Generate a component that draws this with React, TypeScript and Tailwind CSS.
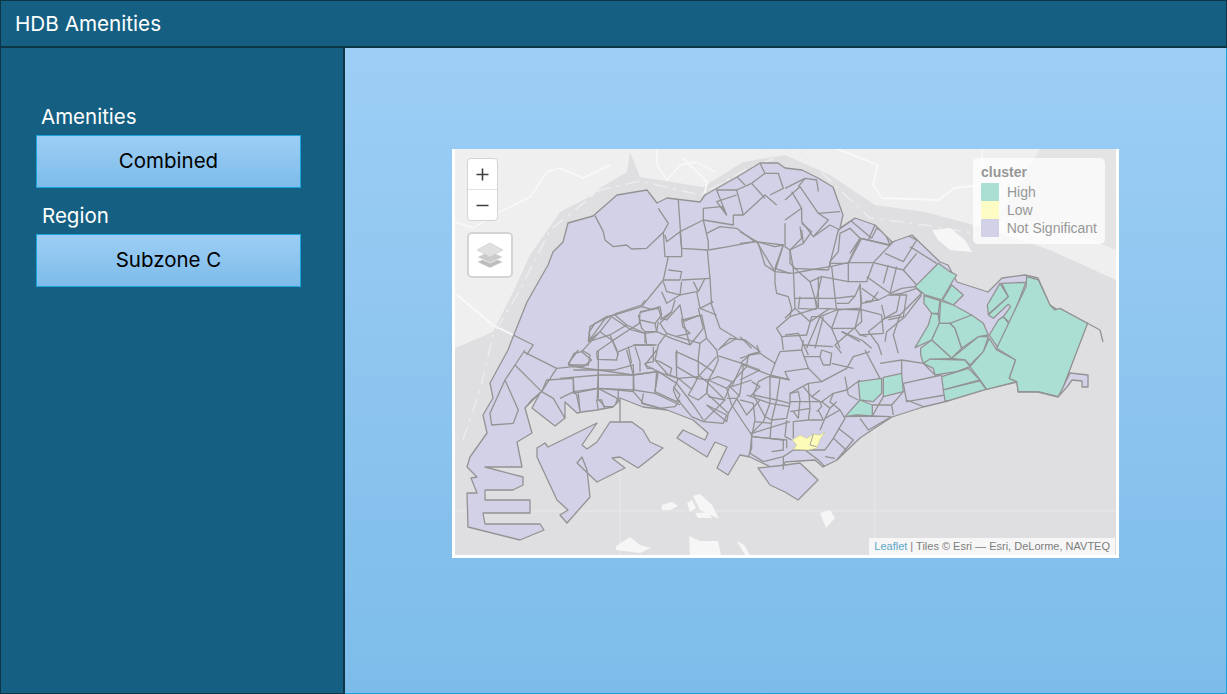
import React from "react";

const FONT = "font-['Inter','Noto_Sans',sans-serif]";

// outlines, in page pixels
const mainland =
  "513,337 527,302 548,265 553,252 563,242 568,223 593,216 617,195 647,190 657,203 667,198 700,202 705,195 737,177 760,163 778,163 785,168 802,170 818,178 833,187 843,215 840,228 855,218 875,225 892,242 912,235 940,262 948,265 957,282 988,292 1002,278 1025,275 1038,278 1050,305 1058,310 1087,323 1063,387 1070,373 1088,375 1088,387 1082,387 1082,381 1072,380 1067,387 1058,397 1038,392 1018,392 1017,382 987,389 948,401 923,407 892,417 875,428 860,438 837,460 823,467 815,460 785,462 783,473 750,457 740,455 728,475 717,468 727,447 715,442 707,457 677,438 683,430 705,440 708,433 693,420 667,410 643,407 620,398 620,422 620,400 613,407 597,410 582,412 577,413 565,402 565,418 555,426 532,408 540,393 525,408 532,433 517,442 522,467 485,467 523,477 523,485 513,490 485,490 485,500 530,500 530,513 483,513 485,524 540,524 544,530 520,540 468,527 467,493 477,493 471,478 477,477 467,467 470,457 487,433 483,415 493,398 490,383 508,350";
const jurong =
  "537,448 545,443 548,447 597,423 582,445 587,449 597,442 610,422 632,422 643,430 650,442 663,448 652,457 638,468 620,457 612,458 625,468 597,482 577,463 582,457 587,470 590,497 567,523 560,515 568,510 557,500 537,457";
const sentosa = "758,468 785,465 800,463 818,480 798,500 785,492 770,485";

// teal subzones, traced at 3x from x=900 y=255
const tealEast = [
  "45,95 115,25 150,50 170,60 160,75 125,135 75,120",
  "155,90 190,120 160,150 128,135",
  "72,122 120,137 115,175 95,175 72,145",
  "122,138 160,150 215,180 205,195 150,205 118,205",
  "95,175 115,178 118,205 95,255 45,278 85,210",
  "118,205 150,205 165,220 185,280 155,310 95,255",
  "150,205 215,180 250,205 265,240 235,245 185,280 165,220",
  "62,280 95,255 155,310 90,315 70,325 62,300",
  "155,310 235,245 265,245 250,290 210,330 195,315",
  "70,325 90,312 195,315 210,335 170,350 105,360 100,340",
  "210,335 250,290 268,250 290,285 347,315 328,370 350,380 260,403 240,375",
  "125,365 205,340 240,375 130,405",
  "130,405 240,378 258,403 145,437 135,437",
  "300,85 325,125 265,178 262,150",
  "305,85 378,82 330,205 310,185 332,155 325,148 280,190 265,180 325,125",
  "295,195 310,185 328,208 295,280 268,240",
  "380,65 415,75 450,150 465,165 480,160 563,205 490,395 475,425 415,410 355,410 350,380 328,370 347,315 290,280 378,95",
];

const tealCentral = [
  "220,95 290,85 290,130 265,155 225,150",
  "295,82 350,70 355,125 295,140",
  "180,200 225,150 262,165 262,198 215,195",
];
const yellow = "22,270 45,255 65,265 85,252 105,255 120,245 105,270 95,295 70,300 25,298 35,285";

// subzone boundaries, each group keeps the coords of the crop it was read from
const lineGroups: { x: number; y: number; d: string[] }[] = [
  {
    x: 450,
    y: 145,
    d: [
      "M435,212 L460,260 L465,285 L490,305 L530,300 L545,312 L590,310 L640,262 L655,235 L625,190",
      "M640,262 L645,335 L695,335 L695,310 L690,260 L650,290 L645,270",
      "M685,165 L695,310 L772,315 L780,400 L785,480 L810,550",
      "M690,260 L760,225 L775,290 L775,315",
      "M760,190 L760,225 L850,240 L850,210",
      "M770,265 L810,245 L860,250 L915,290 L835,305 L775,315",
      "M915,290 L960,295 L1000,300 L975,370 L1020,385",
      "M925,295 L945,360 L975,380",
      "M760,190 L815,185 L830,210 L800,135 L860,135 L880,210 L850,210",
      "M880,210 L945,150 L980,180",
      "M860,135 L905,115 L945,85 L930,55",
      "M905,115 L945,160 M860,95 L885,120",
      "M945,85 L985,85 L1000,130 L960,150",
      "M830,210 L800,170 L860,150",
      "M655,335 L640,405 L690,405 L695,380 L655,375",
      "M640,405 L575,485 L495,510 L470,515 L415,590 L420,545 L470,515",
      "M695,405 L780,400",
      "M640,410 L650,440 L690,450 L695,410",
      "M730,410 L745,440 L765,400",
      "M790,470 L750,490 L740,440 L690,450",
      "M750,490 L800,510",
      "M810,550 L860,580 L810,610",
      "M495,510 L530,540 L480,570 L415,590",
      "M570,500 L625,490 L635,520 L650,525 L690,480 L700,530 L750,510",
      "M635,440 L650,475 L690,450 M575,485 L610,495",
      "M565,510 L575,550 L585,560 L620,560 L625,530",
      "M585,560 L590,600 L620,600",
      "M620,560 L665,580 L720,600 L760,550 L745,490",
      "M700,530 L720,600 M530,540 L585,565 M480,570 L505,630 M550,600 L585,600",
      "M190,570 L250,600 L230,630",
    ],
  },
  {
    x: 785,
    y: 145,
    d: [
      "M0,130 L60,100 L95,105 L100,140",
      "M0,165 L45,125 L100,205 L165,200",
      "M60,100 L40,125",
      "M20,140 L50,190 L50,230 L85,275 L130,225 L100,205",
      "M50,190 L0,225",
      "M45,245 L50,280 L15,315 L25,370 L130,375 L160,255 L210,220",
      "M135,355 L190,355 L230,280 L315,300 L290,240",
      "M270,240 L250,285",
      "M25,370 L30,490 L0,520",
      "M100,395 L100,490 L230,495",
      "M225,415 L230,530 L150,600 L170,625",
      "M30,460 L90,460 L100,490",
      "M230,430 L280,465 L240,470",
      "M280,465 L310,450 L350,445 L395,430",
      "M290,480 L300,520 L250,560 L280,600 L290,630",
      "M395,430 L410,445 L345,510 L325,570 L340,625",
      "M300,520 L345,510 M170,560 L225,590",
      "M0,570 L40,565 L70,630 M30,490 L75,530 L135,490",
    ],
  },
  {
    x: 560,
    y: 300,
    d: [
      "M25,195 L42,160 L65,155 L95,180 L70,200 L25,195",
      "M65,155 L120,95 L90,120 L88,95 L105,70 L170,40 L245,15 L255,0",
      "M120,95 L155,50 L210,88 L158,122 L120,95",
      "M158,122 L110,155 L112,178 L170,180 L175,155 L225,135 L280,135",
      "M158,122 L172,152",
      "M210,88 L255,100 L255,130",
      "M210,88 L238,70 L240,38 L300,20 L305,45 L285,70 L240,60",
      "M285,70 L290,95 L255,100",
      "M300,60 L335,35 L345,0",
      "M335,35 L300,70 L320,100 L295,135 L285,180 L325,225",
      "M320,100 L350,110 L420,130 L415,175 L415,225 L440,245",
      "M365,55 L368,80 L390,100 L345,110",
      "M368,60 L425,45 L440,115 L470,150 L475,180 L460,215 L445,240",
      "M420,130 L440,115",
      "M475,150 L510,115 L555,120 L600,155 L565,165 L560,195 L600,210",
      "M475,168 L560,195 L545,195 L515,260",
      "M348,155 L415,185 L460,215",
      "M348,155 L350,230",
      "M285,180 L300,185 L335,205 L330,225 L355,235 L415,230",
      "M225,140 L240,185 L240,215",
      "M205,140 L215,190",
      "M280,140 L280,185 L255,190 L262,205 L280,205",
      "M0,235 L120,225 L215,225 L290,215 L355,235 L340,270 L350,295 L395,350",
      "M40,210 L165,210 L220,195 L222,270 L115,265",
      "M115,210 L112,295 L135,320 L165,320 L172,295 L115,265",
      "M40,235 L42,275 L112,265",
      "M0,295 L42,275 L50,285 L60,332",
      "M222,270 L285,280 L290,215",
      "M250,280 L245,310 L300,325 L345,320 L360,300",
      "M285,280 L360,315",
      "M180,300 L182,390 M180,300 L230,325 M185,330 L228,328",
      "M355,235 L395,268 L415,230",
      "M395,268 L385,285 L415,300 L440,280 L445,240",
      "M440,245 L495,300 L430,365 L395,350",
      "M440,315 L500,345 L490,370 L430,365",
      "M445,240 L475,230 L515,245 L495,295",
      "M445,290 L495,300",
      "M500,295 L530,295 L560,345 L600,300",
      "M510,260 L540,290 M540,240 L600,210",
      "M575,245 L600,260 L570,290 M515,260 L575,240",
    ],
  },
  {
    x: 450,
    y: 350,
    d: [
      "M195,45 L275,125 L245,150 L225,175",
      "M195,45 L165,90 L205,180 L190,220 L125,225 L120,190 L165,90",
      "M225,0 L195,45",
      "M220,5 L320,55 L275,125 L310,145 L345,205",
      "M320,55 L370,50 L445,60 L550,75 L625,65 L680,100 L730,165 L760,210",
      "M275,125 L290,90 L370,85 L370,130",
      "M370,50 L355,40 L385,0 M355,45 L415,45 L420,15 L395,0",
      "M445,0 L445,145",
      "M370,130 L445,115 L505,120 L550,125 L580,160 L650,180",
      "M550,75 L550,125",
      "M625,65 L615,125 L680,155 L690,135 L670,110",
      "M505,120 L505,170 L445,180 L440,150 L455,150 L465,180",
      "M385,130 L390,185 M510,145 L555,182",
      "M530,0 L550,75 M620,0 L585,45 L625,65",
      "M680,0 L680,50 L740,85 L800,20",
      "M740,85 L775,90 L770,130 L835,190",
      "M770,165 L830,215 L835,190 L870,130 L880,45",
      "M775,90 L830,115 L890,50",
      "M830,115 L845,165 L905,255",
      "M905,255 L905,295 L895,320",
      "M890,135 L960,160 L940,215 L905,250 L1020,215",
      "M960,75 L1020,90",
      "M880,45 L960,75 L960,160 M960,160 L1020,170",
      "M910,260 L1000,270 L1000,300 L965,305",
    ],
  },
  {
    x: 740,
    y: 220,
    d: [
      "M0,35 L50,65 L0,70",
      "M50,65 L105,80 L130,75 L105,155 L160,160 L210,150 L270,140 L325,128 L400,128 L490,150 L530,195",
      "M50,65 L105,155",
      "M105,155 L105,190 L110,220 L145,230 L155,265 L150,290 L110,325 L125,350 L200,345 L215,290 L240,290 L290,270 L350,265 L425,285",
      "M135,10 L135,80 L150,90 L150,130 L175,155 L210,185 L225,235 L230,265 L150,290",
      "M150,90 L190,70 L215,35 L185,10 M190,70 L185,30",
      "M220,50 L270,15 L300,30",
      "M270,140 L270,125 L295,95 L300,40 L330,25 L360,55 L325,128",
      "M360,55 L330,100 M360,55 L445,75 L455,70 L400,128",
      "M395,55 L410,25 M330,0 L395,55",
      "M455,70 L490,40 L530,60 L490,125 L435,100",
      "M510,80 L590,130 M490,150 L530,100 M410,25 L450,45 L455,70",
      "M210,185 L245,170 L325,185 L380,185 L400,130",
      "M325,128 L325,185",
      "M380,170 L450,220 L485,205 L525,200 L545,220",
      "M245,170 L230,235",
      "M275,140 L285,230 L290,270",
      "M180,230 L175,265 L230,268",
      "M180,235 L225,235 L285,235 L345,228 L360,195",
      "M345,228 L325,250 L290,250",
      "M360,195 L365,250 L395,245 L400,235 L415,215",
      "M365,250 L360,265 L345,325 L360,345 L430,340 L425,285",
      "M445,135 L430,190 M470,140 L450,220",
      "M450,225 L480,225 L470,275 L425,300",
      "M480,225 L500,225 L490,290 L445,300",
      "M545,225 L495,290 L440,335 L435,365",
      "M240,290 L200,385 M250,290 L225,385",
      "M240,290 L275,325 L295,270",
      "M275,325 L345,325 M275,325 L300,385",
      "M305,335 L365,360 L395,385 M360,345 L380,350",
      "M0,350 L35,385 M190,375 L280,380",
      "M125,350 L130,390",
    ],
  },
  {
    x: 740,
    y: 340,
    d: [
      "M0,70 L30,45 L60,40 L50,15 M30,45 L0,55",
      "M60,40 L105,70 L120,35 L185,30 L190,0",
      "M105,70 L90,110 L145,118 L135,95 L205,85 L245,125 L320,85 L340,50 L390,35",
      "M185,30 L205,85 M190,50 L240,50 L245,30",
      "M240,50 L250,75 L270,75 L275,40 L245,30 M275,70 L340,85",
      "M145,118 L105,110 L85,110 L55,125 L40,165 L110,180 L120,115",
      "M110,180 L95,240 L140,235 L150,190 L110,180",
      "M40,165 L75,230 L95,240",
      "M150,190 L150,160 L205,130 L245,125",
      "M150,160 L175,155 L180,180 M205,130 L210,205 L150,215",
      "M150,185 L250,185 M180,180 L175,235",
      "M190,140 L215,170 L240,185 L245,200 L230,215",
      "M245,185 L280,160 L320,150 L360,120",
      "M280,160 L270,185 L300,210 L315,235",
      "M245,185 L270,205 L255,235 L240,270",
      "M210,205 L205,240 L160,245 L160,295 M205,240 L250,240",
      "M215,170 L240,150 M160,215 L175,235 M235,210 L250,240",
      "M270,205 L290,185 M255,235 L300,210",
      "M315,235 L280,295 L335,345",
      "M280,295 L255,330 L160,330",
      "M0,180 L40,190 L45,240 L35,290 L140,300 L140,325",
      "M95,240 L90,295 M140,240 L135,290 L155,300 M45,245 L95,250",
      "M35,290 L30,340 L70,365 L130,350 L160,330 M130,350 L130,390",
    ],
  },
  {
    x: 785,
    y: 350,
    d: [
      "M355,100 L470,75 M355,100 L365,155 L480,135 M365,150 L415,170",
      "M190,135 L220,150 M180,80 L190,135",
      "M180,200 L262,198 L315,200",
      "M160,235 L205,270 L155,330",
      "M225,205 L250,240 L320,200",
      "M262,165 L320,165 L355,125 M320,165 L325,195 M295,140 L262,198",
      "M240,0 L285,85 M285,40 L350,30 L415,40 L450,75 M350,30 L350,70 M415,40 L470,20",
      "M60,300 L100,330 L120,350 M120,320 L150,325",
    ],
  },
];

const lightIslands = [
  "662,505 672,502 678,506 670,510 662,510",
  "687,503 692,500 696,508 690,512",
  "693,496 700,494 712,505 719,519 700,510",
  "695,513 708,512 712,518 698,518",
  "616,546 630,537 640,545 651,548 640,553 616,550",
  "689,536 700,541 718,541 721,555 690,555",
  "737,541 744,545 750,555 745,555",
  "820,513 830,510 835,518 826,528",
  "932,230 950,228 965,240 972,252 950,250 938,240",
];

function Swatch({ color, label }: { color: string; label: string }) {
  return (
    <div className="flex h-[18px] items-center gap-2">
      <div className={`h-[18px] w-[18px] ${color}`} />
      <span className="whitespace-nowrap">{label}</span>
    </div>
  );
}

function MapPanel() {
  return (
    <div className="relative h-[409px] w-[667px] bg-white px-[3px] pb-[3px]">
      <svg className="block h-[406px] w-[661px]" viewBox="455 149 661 406">
        <defs>
          <clipPath id="land">
            <polygon points={mainland} />
          </clipPath>
        </defs>
        <rect x="455" y="149" width="661" height="406" fill="#dfdfe1" />
        {/* malaysia + north shore */}
        <polygon
          points="455,149 1116,149 1116,280 1050,250 985,228 925,212 875,205 830,175 785,155 743,162 703,187 640,177 630,152 627,172 600,188 593,195 560,212 530,255 513,292 493,332 455,348"
          fill="#efeff0"
        />
        <polygon points="1040,149 1116,149 1116,250 1060,228 1000,215" fill="#e4e4e5" />
        <g fill="none" stroke="#f9f9f9" strokeLinecap="round" strokeLinejoin="round" strokeWidth="1.4">
          <path d="M455,222 L473,228 L500,212 L530,197 L547,172 L560,168 L583,178 L610,165" />
          <path strokeWidth="1.8" d="M457,295 L493,325 L513,335" />
          <path d="M657,150 L657,165 L667,180 L680,165 L697,162 L715,172" />
          <path strokeWidth="1.8" d="M683,158 L707,182 L705,192" />
          <path strokeWidth="1.8" d="M835,148 L878,165 L873,185 L882,198 L938,200 L955,188 L982,185" />
          <path d="M982,149 L982,185" />
        </g>
        <path
          d="M463,440 L480,390 L493,335 L520,290 L550,230 L600,190 L640,181 L700,195 L745,170 L790,152 M800,152 L840,190 L870,218 L925,225 L985,235"
          fill="none"
          stroke="#ececee"
          strokeWidth="1.5"
          strokeDasharray="14 6 3 6"
        />
        <path d="M455,511 L1116,511 M620,470 L620,555 M875,428 L875,555" stroke="#e8e8ea" strokeWidth="1" />
        {lightIslands.map((p) => (
          <polygon key={p} points={p} fill="#f6f6f6" />
        ))}

        <g fill="#d2d1e7" stroke="#939393" strokeWidth="1.3" strokeLinejoin="round">
          <polygon points={mainland} />
          <polygon points={jurong} />
          <polygon points={sentosa} />
          <path d="M1087,323 L1100,330 L1103,342" fill="none" />
        </g>
        <g clipPath="url(#land)" fill="none" stroke="#939393" strokeLinejoin="round">
          {lineGroups.map((g) => (
            <g key={`${g.x}-${g.y}`} transform={`translate(${g.x} ${g.y}) scale(0.3333)`}>
              {g.d.map((d) => (
                <path key={d} d={d} strokeWidth="3.9" />
              ))}
            </g>
          ))}
        </g>
        <g transform="translate(900 255) scale(0.3333)" fill="#abdfd4" stroke="#939393" strokeWidth="3.9" strokeLinejoin="round">
          {tealEast.map((p) => (
            <polygon key={p} points={p} />
          ))}
        </g>
        <g transform="translate(785 350) scale(0.3333)" stroke="#939393" strokeWidth="3.9" strokeLinejoin="round">
          {tealCentral.map((p) => (
            <polygon key={p} points={p} fill="#abdfd4" />
          ))}
          <polygon points={yellow} fill="#fdfbb8" stroke="#c9c69a" strokeWidth="2" />
          <path d="M85,252 L75,285 L95,290" fill="none" strokeWidth="2.5" />
        </g>
      </svg>

      {/* zoom */}
      <div className="absolute left-[15px] top-[9px] flex w-[31px] flex-col overflow-hidden rounded-[4px] border border-[#d4d4d4] bg-white text-[#3f3f3f]">
        <div className="flex h-[31px] items-center justify-center border-b border-[#e2e2e2]">
          <svg width="15" height="15" viewBox="0 0 15 15" stroke="currentColor" strokeWidth="1.6">
            <path d="M1.5,7.5 H13.5 M7.5,1.5 V13.5" />
          </svg>
        </div>
        <div className="flex h-[30px] items-center justify-center">
          <svg width="15" height="15" viewBox="0 0 15 15" stroke="currentColor" strokeWidth="1.6">
            <path d="M1.5,7.5 H13.5" />
          </svg>
        </div>
      </div>

      {/* layers */}
      <div className="absolute left-[15px] top-[83px] flex h-[46px] w-[46px] items-center justify-center rounded-[5px] border-2 border-[#d4d4d4] bg-white">
        <svg width="28" height="27" viewBox="0 0 28 27">
          <path d="M14,14 L27,20 L14,26 L1,20 Z" fill="#bdbdbd" stroke="#fff" strokeWidth="0.6" />
          <path d="M14,9 L27,15 L14,21 L1,15 Z" fill="#cbcbcb" stroke="#fff" strokeWidth="0.6" />
          <path d="M14,1 L27,8 L14,15 L1,8 Z" fill="#e0e0e0" stroke="#c8c8c8" strokeWidth="0.6" />
        </svg>
      </div>

      {/* legend */}
      <div className="absolute left-[521px] top-[9px] h-[86px] w-[132px] rounded-[5px] bg-white/75 px-[8px] pt-[6px] font-['Liberation_Sans',sans-serif] text-[14px] leading-[16px] text-[#979797]">
        <div className="mb-[3px] font-bold">cluster</div>
        <Swatch color="bg-[#abdfd4]" label="High" />
        <Swatch color="bg-[#fdfcc4]" label="Low" />
        <Swatch color="bg-[#d2d1e7]" label="Not Significant" />
      </div>

      {/* attribution */}
      <div className="absolute bottom-[3px] right-[4px] flex h-[17px] items-center bg-white/70 pl-[5px] pr-[5px] font-['Liberation_Sans',sans-serif] text-[11px] text-[#7d7d7d]">
        <span className="text-[#5ba8c9]">Leaflet</span>
        <span className="whitespace-pre"> | Tiles © Esri — Esri, DeLorme, NAVTEQ</span>
      </div>
    </div>
  );
}

function Picker({ label, value, nudge }: { label: string; value: string; nudge: string }) {
  return (
    <div className="flex flex-col">
      <span className={`mb-[6px] text-[20.5px] leading-[24px] text-white ${nudge}`}>{label}</span>
      <div className="flex h-[53px] w-[265px] items-center justify-center border border-[#19a3dc] bg-gradient-to-b from-[#9dcef5] to-[#7dbcea] text-[20.5px] text-black">
        {value}
      </div>
    </div>
  );
}

export default function App() {
  return (
    <div className={`flex h-[694px] w-[1227px] flex-col overflow-hidden bg-[#156082] ${FONT}`}>
      <header className="flex h-[48px] shrink-0 items-center border-x border-t border-b-2 border-[#0c3546] pl-[14px] text-[20.7px] text-white">
        HDB Amenities
      </header>
      <div className="flex min-h-0 flex-1">
        <aside className="flex w-[345px] shrink-0 flex-col gap-[16px] border-b border-l border-r-2 border-[#0c3546] pl-[35px] pt-[57px]">
          <Picker label="Amenities" value="Combined" nudge="pl-[5px]" />
          <Picker label="Region" value="Subzone C" nudge="pl-[6px]" />
        </aside>
        <main className="flex flex-1 justify-center border-r border-b border-[#19a3dc] bg-gradient-to-b from-[#9dcef5] to-[#7dbcea] pt-[101px]">
          <MapPanel />
        </main>
      </div>
    </div>
  );
}
